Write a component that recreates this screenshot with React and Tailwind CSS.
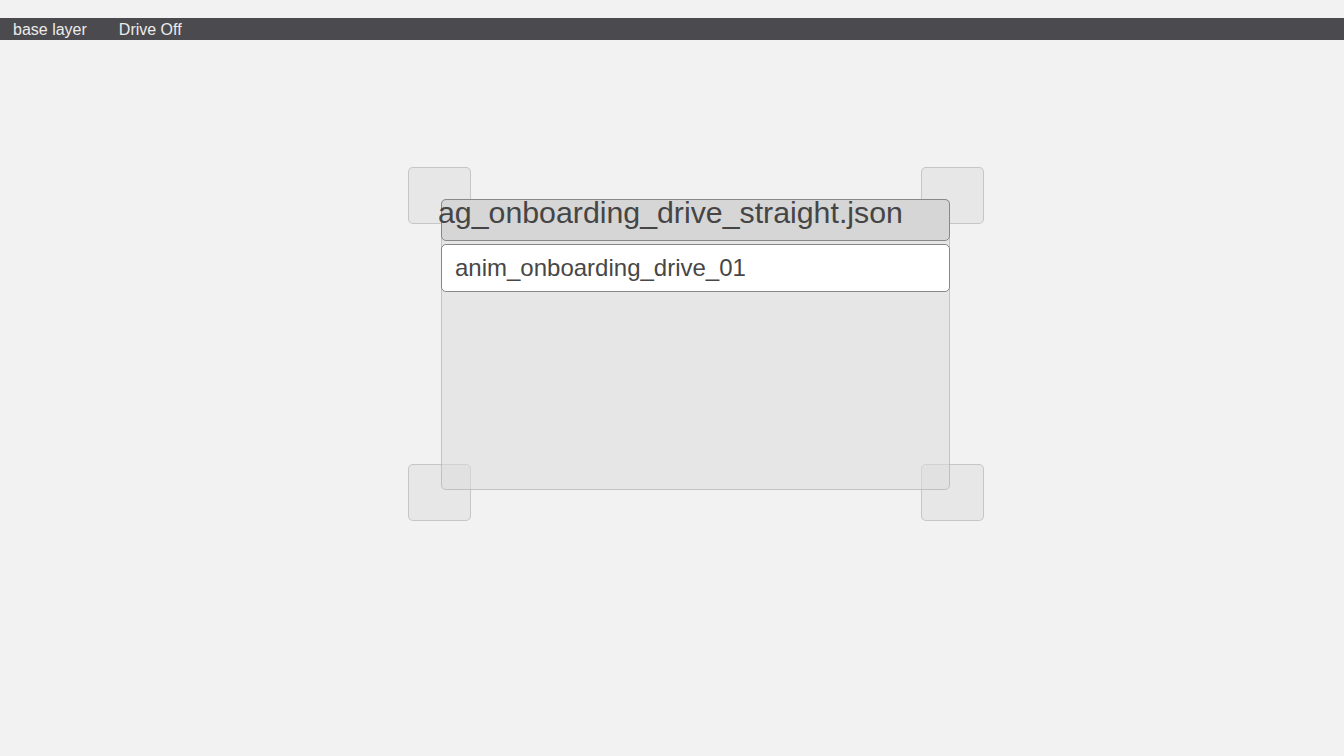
import React from "react";

const Handle = ({ className }) => (
  <div
    className={`absolute w-[63px] h-[57px] rounded-[5px] border border-[rgba(150,150,150,0.4)] bg-[rgba(220,220,220,0.5)] ${className}`}
  />
);

const App = () => {
  return (
    <div
      className="min-h-screen w-full bg-[#f2f2f2]"
      style={{ fontFamily: '"Liberation Sans", Arial, sans-serif' }}
    >
      {/* top strip */}
      <div className="h-[18px]" />

      {/* menu bar */}
      <div className="h-[22px] pt-px bg-[#4b4a4f] flex items-center text-[16px] text-[#ececec] leading-none">
        <span className="ml-[13px]">base layer</span>
        <span className="ml-[32px]">Drive Off</span>
      </div>

      {/* canvas */}
      <div className="pt-[159px] pl-[441px]">
        <div className="relative w-[509px] h-[291px]">
          {/* resize handles sit under the panel */}
          <Handle className="left-[-33px] top-[-32px]" />
          <Handle className="left-[480px] top-[-32px]" />
          <Handle className="left-[-33px] top-[265px]" />
          <Handle className="left-[480px] top-[265px]" />

          <div className="absolute inset-0 rounded-[5px] border border-[rgba(160,160,160,0.5)] bg-[rgba(220,220,220,0.55)] flex flex-col">
            <div className="h-[42px] -mx-px -mt-px rounded-[5px] border border-[#888888] bg-[#d6d6d6] overflow-visible">
              <div className="ml-[-4px] mt-[-5px] text-[30.3px] leading-[36px] text-[#454545] whitespace-nowrap">
                ag_onboarding_drive_straight.json
              </div>
            </div>
            <div className="mt-[3px] -mx-px h-[48px] rounded-[5px] border border-[#888888] bg-white flex items-center">
              <span className="ml-[13px] text-[24px] text-[#474747] leading-none">
                anim_onboarding_drive_01
              </span>
            </div>
          </div>
        </div>
      </div>
    </div>
  );
};

export default App;
